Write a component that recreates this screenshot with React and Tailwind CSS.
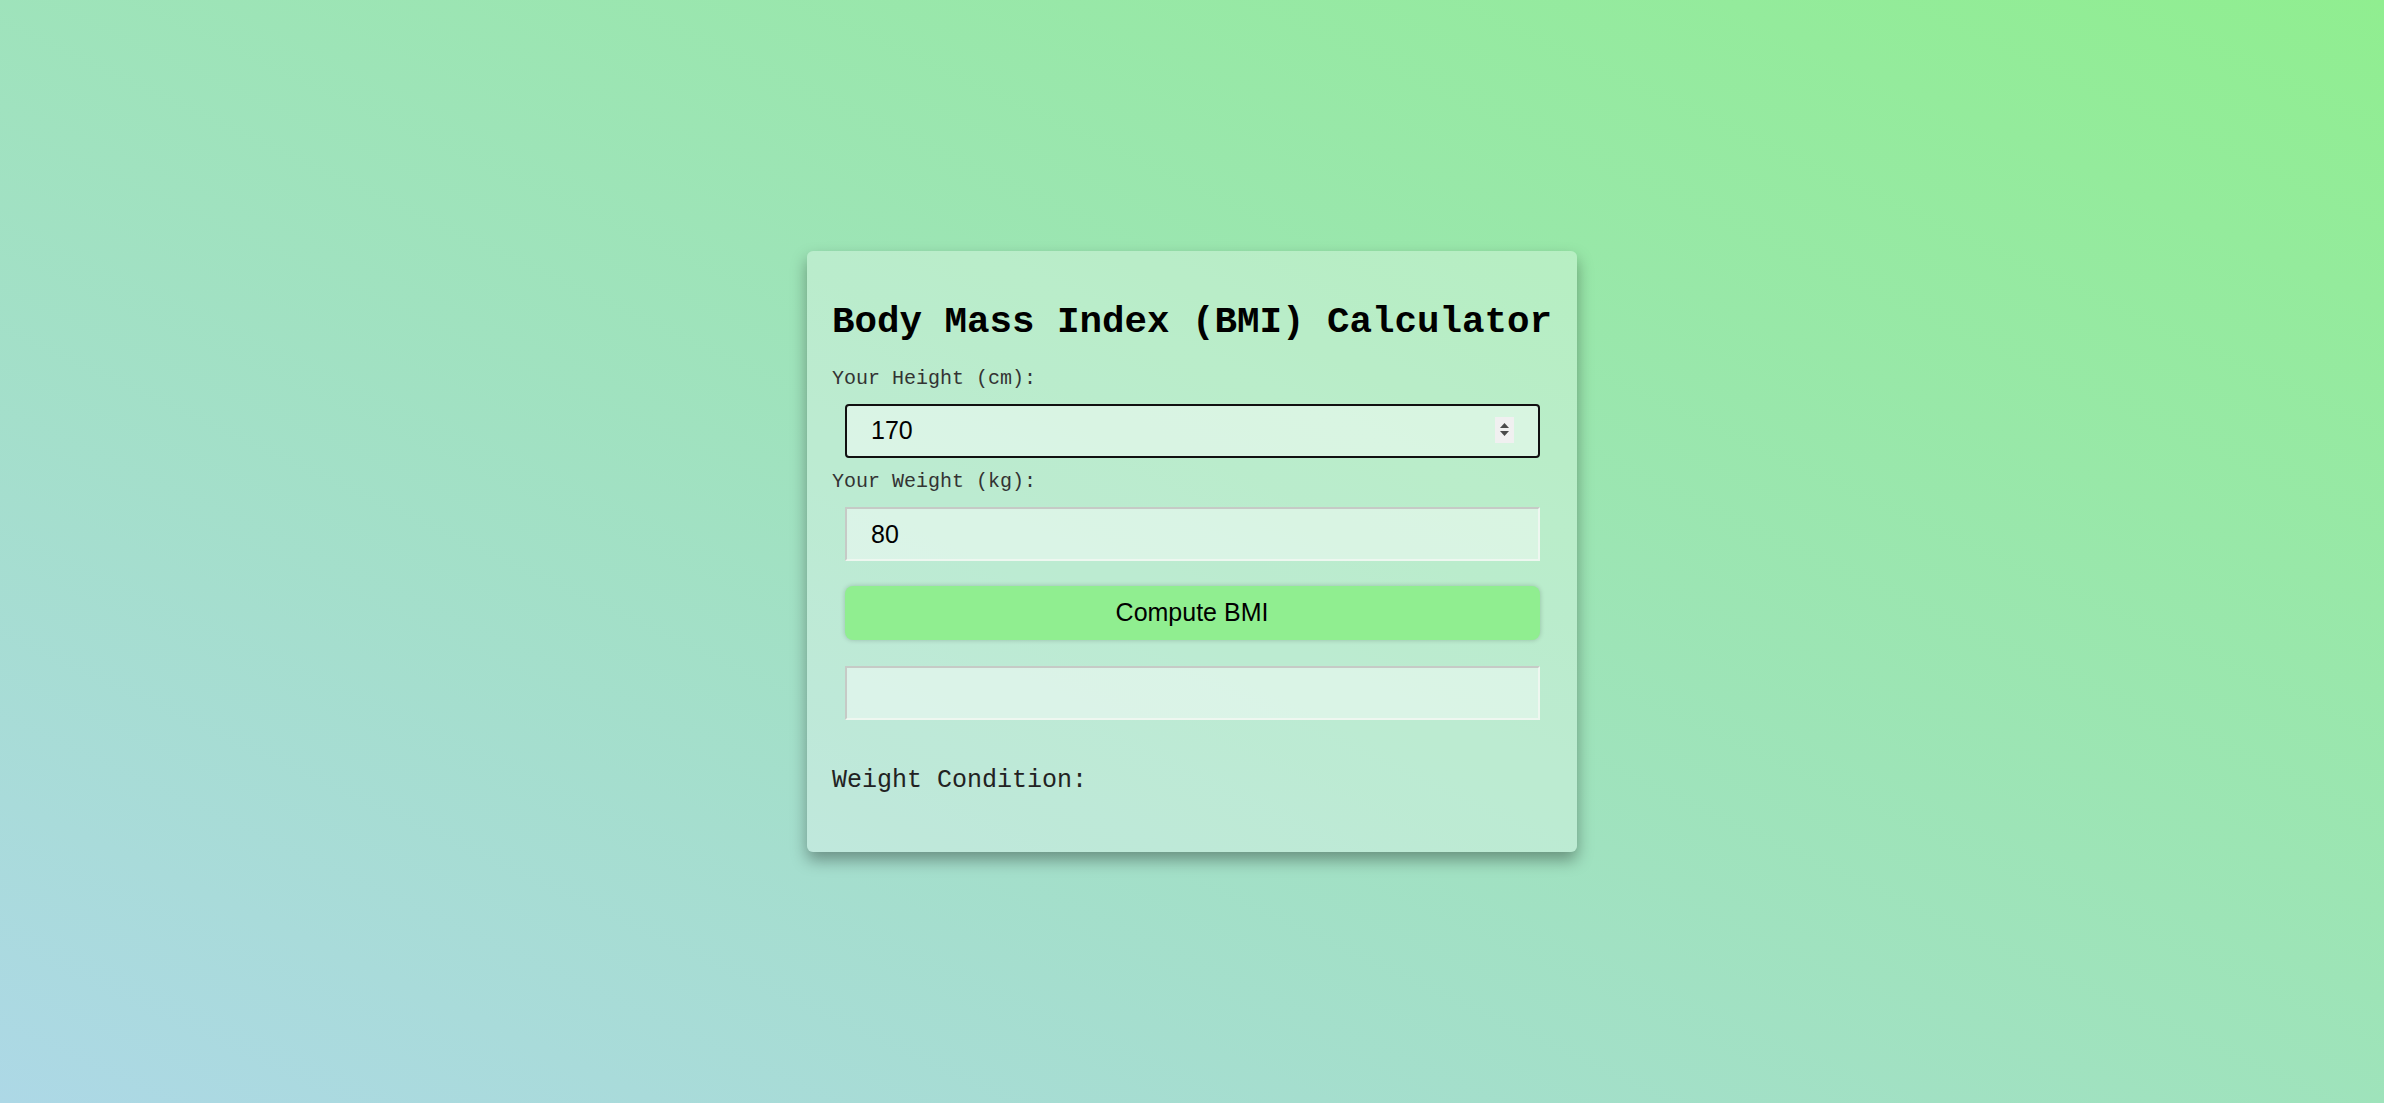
import React from "react";

const mono = "font-['Courier_New','Liberation_Mono',monospace]";
const sans = "font-['Arial','Liberation_Sans',sans-serif]";

export default function App() {
  return (
    <div className="h-screen w-full flex items-center justify-center bg-[linear-gradient(to_top_right,#add8e6,#90ee90)]">
      <div className="w-[770px] rounded-[6px] bg-white/30 p-[25px] shadow-[0_8px_16px_rgba(0,0,0,0.35)] flex flex-col">
        <h1 className={`${mono} mt-[25px] mb-[24px] text-[37.5px] leading-[42.5px] font-bold text-black whitespace-nowrap`}>
          Body Mass Index (BMI) Calculator
        </h1>
        <label className={`${mono} text-[20px] leading-[24px] text-[#333]`}>Your Height (cm):</label>
        <div className="relative mt-[12.5px] mx-[12.5px] h-[54px]">
          <input
            type="text"
            readOnly
            value="170"
            className={`${sans} block w-full h-[54px] pl-[24.5px] text-[25px] text-black bg-white/45 border-2 border-[#101010] rounded-[4px] outline-none`}
          />
          <div className="absolute right-[26px] top-[13px] w-[19px] h-[26px] bg-[#f0f0f0] flex flex-col items-center justify-center gap-[3px]">
            <svg width="9" height="5" viewBox="0 0 9 5"><path d="M4.5 0 L9 5 L0 5 Z" fill="#4a4a4a" /></svg>
            <svg width="9" height="5" viewBox="0 0 9 5"><path d="M0 0 L9 0 L4.5 5 Z" fill="#4a4a4a" /></svg>
          </div>
        </div>
        <label className={`${mono} mt-[12.5px] text-[20px] leading-[24px] text-[#333]`}>Your Weight (kg):</label>
        <input
          type="text"
          readOnly
          value="80"
          className={`${sans} block mt-[13px] mx-[12.5px] h-[54px] pl-[24.5px] text-[25px] text-black bg-white/45 border-2 border-t-[#c6cac6] border-l-[#c6cac6] border-b-[#eef7f0] border-r-[#eef7f0] outline-none`}
        />
        <button
          className={`${sans} mt-[25px] mx-[12.5px] h-[54px] rounded-[8px] bg-[#90ee90] text-[25px] text-black shadow-[0_0_5px_rgba(0,0,0,0.2)]`}
        >
          Compute BMI
        </button>
        <input
          type="text"
          readOnly
          value=""
          className={`${sans} block mt-[26px] mx-[12.5px] h-[54px] pl-[24.5px] text-[25px] text-black bg-white/45 border-2 border-t-[#c6cac6] border-l-[#c6cac6] border-b-[#eef7f0] border-r-[#eef7f0] outline-none`}
        />
        <p className={`${mono} mt-[47px] mb-[32px] text-[25px] leading-[28.3px] text-[#222]`}>Weight Condition:</p>
      </div>
    </div>
  );
}
